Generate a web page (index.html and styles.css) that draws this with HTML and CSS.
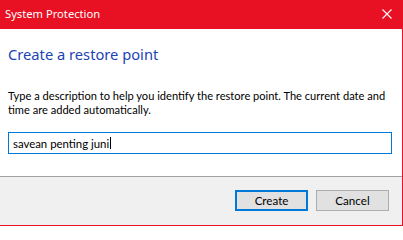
FILE: index.html
```html
<!DOCTYPE html>
<html>
<head>
<meta charset="utf-8">
<link rel="stylesheet" href="styles.css">
</head>
<body>
<div class="window">
  <div class="titlebar">
    <span class="title">System Protection</span>
    <span class="close">
      <svg width="10" height="10" viewBox="0 0 10 10"><path d="M0.5 0.5 L9.5 9.5 M9.5 0.5 L0.5 9.5" stroke="#fff" stroke-width="1.1" fill="none"/></svg>
    </span>
  </div>
  <div class="content">
    <h1 class="heading">Create a restore point</h1>
    <p class="desc">Type a description to help you identify the restore point. The current date and time are added automatically.</p>
    <div class="field"><span class="value">savean penting juni</span><span class="caret"></span></div>
  </div>
  <div class="footer">
    <button class="btn btn-default">Create</button>
    <button class="btn">Cancel</button>
  </div>
</div>
</body>
</html>
```
FILE: styles.css
```css
html, body {
  margin: 0;
  padding: 0;
  background: #ffffff;
}
.window {
  width: 402px;
  height: 225px;
  border-right: 1px solid #e81123;
  border-bottom: 1px solid #e81123;
  display: flex;
  flex-direction: column;
  font-family: "Noto Sans", "Open Sans", sans-serif;
  background: #ffffff;
}
.titlebar {
  height: 29px;
  background: #e81123;
  display: flex;
  align-items: center;
  justify-content: space-between;
  padding: 0 10px 0 5px;
  flex: none;
}
.title {
  color: #ffffff;
  font-size: 11.2px;
  padding-bottom: 2px;
}
.close {
  display: flex;
  margin-bottom: 1px;
}
.content {
  flex: 1;
  padding: 0 10px 0 8px;
  border-bottom: 1px solid #a0a0a0;
}
.heading {
  margin: 15px 0 0 0;
  font-size: 14.7px;
  font-weight: normal;
  line-height: 20px;
  color: #1c44b4;
}
.desc {
  margin: 25px 0 0 0;
  font-family: "Lato", "Noto Sans", sans-serif;
  font-size: 11.1px;
  line-height: 14px;
  color: #000000;
}
.field {
  margin-top: 15px;
  height: 20px;
  border: 1px solid #0078d7;
  display: flex;
  align-items: center;
  padding-left: 4px;
  font-family: "Lato", "Noto Sans", sans-serif;
  font-size: 11.4px;
  color: #000;
}
.caret {
  width: 1px;
  height: 12px;
  background: #000;
  margin-left: 1px;
}
.footer {
  height: 48px;
  background: #f0f0f0;
  display: flex;
  justify-content: flex-end;
  align-items: flex-start;
  gap: 8px;
  padding: 13px 13px 0 0;
  box-sizing: border-box;
  flex: none;
}
.btn {
  width: 73px;
  height: 21px;
  margin: 0;
  padding: 0;
  background: #e1e1e1;
  border: 1px solid #adadad;
  font-family: "Lato", "Noto Sans", sans-serif;
  font-size: 11.6px;
  color: #000;
  box-sizing: border-box;
}
.btn-default {
  border: 2px solid #0078d7;
}
```
